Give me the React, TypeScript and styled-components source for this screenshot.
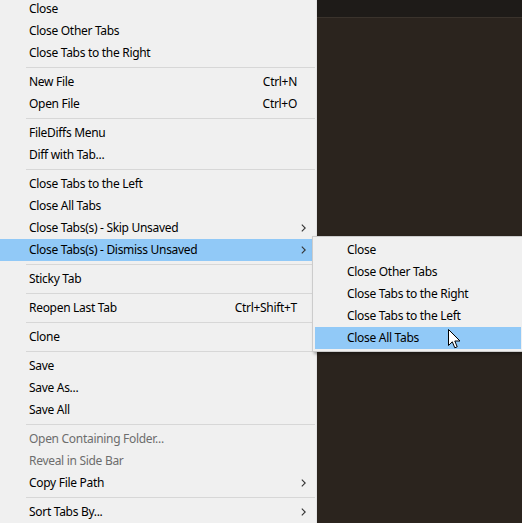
import * as React from 'react';
import styled, { createGlobalStyle } from 'styled-components';

const GlobalStyle = createGlobalStyle`
  html, body {
    margin: 0;
    padding: 0;
    background: #2b241e;
  }
  body {
    font-family: 'Noto Sans', 'Open Sans', sans-serif;
  }
`;

type Entry =
  | { kind: 'sep' }
  | {
      kind: 'item';
      label: string;
      shortcut?: string;
      submenu?: boolean;
      disabled?: boolean;
      active?: boolean;
    };

const mainEntries: Entry[] = [
  { kind: 'item', label: 'Close' },
  { kind: 'item', label: 'Close Other Tabs' },
  { kind: 'item', label: 'Close Tabs to the Right' },
  { kind: 'sep' },
  { kind: 'item', label: 'New File', shortcut: 'Ctrl+N' },
  { kind: 'item', label: 'Open File', shortcut: 'Ctrl+O' },
  { kind: 'sep' },
  { kind: 'item', label: 'FileDiffs Menu' },
  { kind: 'item', label: 'Diff with Tab...' },
  { kind: 'sep' },
  { kind: 'item', label: 'Close Tabs to the Left' },
  { kind: 'item', label: 'Close All Tabs' },
  { kind: 'item', label: 'Close Tabs(s) - Skip Unsaved', submenu: true },
  {
    kind: 'item',
    label: 'Close Tabs(s) - Dismiss Unsaved',
    submenu: true,
    active: true,
  },
  { kind: 'sep' },
  { kind: 'item', label: 'Sticky Tab' },
  { kind: 'sep' },
  { kind: 'item', label: 'Reopen Last Tab', shortcut: 'Ctrl+Shift+T' },
  { kind: 'sep' },
  { kind: 'item', label: 'Clone' },
  { kind: 'sep' },
  { kind: 'item', label: 'Save' },
  { kind: 'item', label: 'Save As...' },
  { kind: 'item', label: 'Save All' },
  { kind: 'sep' },
  { kind: 'item', label: 'Open Containing Folder...', disabled: true },
  { kind: 'item', label: 'Reveal in Side Bar', disabled: true },
  { kind: 'item', label: 'Copy File Path', submenu: true },
  { kind: 'sep' },
  { kind: 'item', label: 'Sort Tabs By...', submenu: true },
];

const subEntries: Entry[] = [
  { kind: 'item', label: 'Close' },
  { kind: 'item', label: 'Close Other Tabs' },
  { kind: 'item', label: 'Close Tabs to the Right' },
  { kind: 'item', label: 'Close Tabs to the Left' },
  { kind: 'item', label: 'Close All Tabs', active: true },
];

const Screen = styled.div`
  position: relative;
  display: flex;
  align-items: flex-start;
  width: 522px;
  height: 523px;
  overflow: hidden;
`;

const MainMenu = styled.div`
  flex: none;
  display: flex;
  flex-direction: column;
  width: 315px;
  margin: -2px 0 0 -3px;
  padding: 0 4px 3px 0;
  background: #f0f0f0;
  border-right: 1px solid #e3e3e3;
`;

const SubMenu = styled.div`
  position: absolute;
  left: 312px;
  top: 236px;
  width: 206px;
  display: flex;
  flex-direction: column;
  padding: 2px;
  background: #f0f0f0;
  border: 1px solid #cccccc;
  box-shadow: 2px 2px 3px rgba(0, 0, 0, 0.35);
`;

const Row = styled.div<{ $active?: boolean; $disabled?: boolean }>`
  flex: none;
  display: flex;
  align-items: center;
  box-sizing: border-box;
  height: 22px;
  padding: 0 6px 1px 32px;
  font-size: 12px;
  letter-spacing: -0.3px;
  color: ${p => (p.$disabled ? '#6d6d6d' : '#000000')};
  background: ${p => (p.$active ? '#91c9f7' : 'transparent')};
  white-space: nowrap;
`;

const Label = styled.span`
  flex: 1;
`;

const Shortcut = styled.span`
  margin-right: 9px;
`;

const Chevron = styled.svg`
  width: 5px;
  height: 8px;
  margin-left: 4px;
`;

const Separator = styled.div`
  flex: none;
  height: 7px;
  display: flex;
  align-items: center;
  margin: 0 -3px 0 29px;

  &::after {
    content: '';
    flex: 1;
    height: 1px;
    background: #d7d7d7;
  }
`;

const Editor = styled.div`
  flex: 1;
  align-self: stretch;
  display: flex;
  flex-direction: column;
  background: #2b241e;
`;

const TabStrip = styled.div`
  height: 17px;
  background: #1e1b18;
  border-bottom: 1px solid #3a332c;
`;

const Cursor = styled.svg`
  position: absolute;
  left: 448px;
  top: 329px;
  width: 13px;
  height: 20px;
`;

function MenuList({ entries }: { entries: Entry[] }): JSX.Element {
  return (
    <>
      {entries.map((e, i) =>
        e.kind === 'sep' ? (
          <Separator key={i} />
        ) : (
          <Row key={i} $active={e.active} $disabled={e.disabled}>
            <Label>{e.label}</Label>
            {e.shortcut && <Shortcut>{e.shortcut}</Shortcut>}
            {e.submenu && (
              <Chevron viewBox="0 0 5 8">
                <polyline
                  points="0.8,0.6 4.2,4 0.8,7.4"
                  fill="none"
                  stroke="#333"
                  strokeWidth="1.1"
                />
              </Chevron>
            )}
          </Row>
        )
      )}
    </>
  );
}

export default function App(): JSX.Element {
  return (
    <>
      <GlobalStyle />
      <Screen>
        <MainMenu>
          <MenuList entries={mainEntries} />
        </MainMenu>
        <Editor>
          <TabStrip />
        </Editor>
        <SubMenu>
          <MenuList entries={subEntries} />
        </SubMenu>
        <Cursor viewBox="0 0 13 20">
          <path
            d="M0.5 0.5 L0.5 16.5 L4.3 12.8 L6.8 18.8 L9.2 17.8 L6.8 12 L12 12 Z"
            fill="#ffffff"
            stroke="#000000"
            strokeWidth="1"
            strokeLinejoin="miter"
          />
        </Cursor>
      </Screen>
    </>
  );
}
